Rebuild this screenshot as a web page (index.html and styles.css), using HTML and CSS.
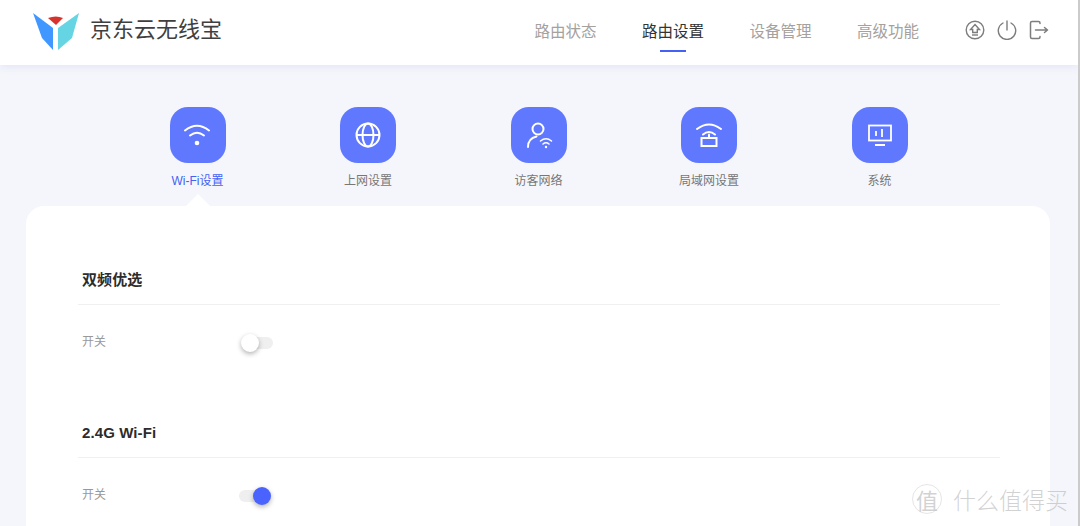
FILE: index.html
```html
<!DOCTYPE html>
<html lang="zh-CN">
<head>
  <meta charset="UTF-8" />
  <meta name="viewport" content="width=device-width, initial-scale=1.0" />
  <title>京东云无线宝</title>
  <link rel="stylesheet" href="styles.css">
</head>
<body>
  <header class="topbar">
    <div class="brand">
      <svg class="logo" width="48" height="38" viewBox="0 0 48 38">
        <path d="M1 1 L21 16 L21 38 L10 26 Z" fill="#3f97ff"/>
        <path d="M47 1 L26 16 L26 38 L40 26 Z" fill="#66d5e3"/>
        <path d="M16 6 Q24 3 31 6 L24 13 Z" fill="#d7322c"/>
      </svg>
      <span class="brand-name">京东云无线宝</span>
    </div>
    <nav class="main-nav">
      <a class="nav-item">路由状态</a>
      <a class="nav-item active">路由设置</a>
      <a class="nav-item">设备管理</a>
      <a class="nav-item">高级功能</a>
    </nav>
    <div class="tools">
      <svg width="20" height="20" viewBox="0 0 20 20" fill="none" stroke="#7d7d7d" stroke-width="1.400">
        <circle cx="10" cy="10" r="8.800"/>
        <path d="M10 4.500 L14.500 9.500 H12.300 V12.500 H7.700 V9.500 H5.500 Z"/>
        <path d="M7 15 H13"/>
      </svg>
      <svg width="20" height="20" viewBox="0 0 20 20" fill="none" stroke="#7d7d7d" stroke-width="1.400" stroke-linecap="round">
        <path d="M6 3 A8.700 8.700 0 1 0 14 3"/>
        <path d="M10 1 V10"/>
      </svg>
      <svg width="20" height="20" viewBox="0 0 20 20" fill="none" stroke="#7d7d7d" stroke-width="1.500" stroke-linecap="round" stroke-linejoin="round">
        <path d="M11 3.500 V3 Q11 1.500 9.500 1.500 H3 Q1.500 1.500 1.500 3 V17 Q1.500 18.500 3 18.500 H9.500 Q11 18.500 11 17 V16.500"/>
        <path d="M6.500 10 H18.500 M15.500 7.500 L18.500 10 L15.500 12.500"/>
      </svg>
    </div>
  </header>

  <main class="content">
    <div class="categories">
      <div class="category selected">
        <div class="cat-icon">
          <svg width="30" height="30" viewBox="0 0 30 30" fill="none" stroke="#fff" stroke-width="2" stroke-linecap="round">
            <path d="M2 10.500 Q14 1 26 10.500"/>
            <path d="M7 15.500 Q14 10 21 15.500"/>
            <circle cx="14" cy="23" r="2.300" fill="#fff" stroke="none"/>
          </svg>
        </div>
        <span class="cat-label">Wi-Fi设置</span>
      </div>
      <div class="category">
        <div class="cat-icon">
          <svg width="30" height="30" viewBox="0 0 30 30" fill="none" stroke="#fff" stroke-width="2">
            <circle cx="15" cy="15" r="11.500"/>
            <ellipse cx="15" cy="15" rx="5.500" ry="11.500"/>
            <path d="M3.500 15 H26.500"/>
          </svg>
        </div>
        <span class="cat-label">上网设置</span>
      </div>
      <div class="category">
        <div class="cat-icon">
          <svg width="30" height="30" viewBox="0 0 30 30" fill="none" stroke="#fff" stroke-width="2" stroke-linecap="round">
            <circle cx="14" cy="9" r="5.500"/>
            <path d="M4 27 Q4 18.500 12.500 16.500"/>
            <path d="M16.500 21 Q22 16.500 27.500 21" stroke-width="1.600"/>
            <path d="M19 24 Q22 21.500 25 24" stroke-width="1.600"/>
            <circle cx="22" cy="27" r="1.200" fill="#fff" stroke="none"/>
          </svg>
        </div>
        <span class="cat-label">访客网络</span>
      </div>
      <div class="category">
        <div class="cat-icon">
          <svg width="30" height="30" viewBox="0 0 30 30" fill="none" stroke="#fff" stroke-width="2" stroke-linecap="round">
            <path d="M3 9 Q15 0 27 9"/>
            <path d="M9 14.500 Q15 9.500 21 14.500"/>
            <path d="M15 14.500 V18"/>
            <rect x="7.500" y="18" width="15" height="8"/>
          </svg>
        </div>
        <span class="cat-label">局域网设置</span>
      </div>
      <div class="category">
        <div class="cat-icon">
          <svg width="30" height="30" viewBox="0 0 30 30" fill="none" stroke="#fff" stroke-width="1.800">
            <rect x="4" y="5.500" width="22" height="15"/>
            <path d="M11 11 V16 M17 9 V17 M10 25 H20"/>
          </svg>
        </div>
        <span class="cat-label">系统</span>
      </div>
    </div>

    <section class="panel">
      <div class="group">
        <h2 class="group-title">双频优选</h2>
        <div class="setting-row">
          <span class="setting-label">开关</span>
          <span class="switch"><span class="knob"></span></span>
        </div>
      </div>
      <div class="group">
        <h2 class="group-title">2.4G Wi-Fi</h2>
        <div class="setting-row">
          <span class="setting-label">开关</span>
          <span class="switch on"><span class="knob"></span></span>
        </div>
      </div>
    </section>
  </main>

  <div class="watermark">
    <span class="wm-badge">值</span>
    <span class="wm-text">什么值得买</span>
  </div>
</body>
</html>
```

FILE: styles.css
```css
html, body {
  height: 100%;
}

body {
  font-family: "Liberation Sans", "Noto Sans CJK SC", sans-serif;
  background-color: #f5f6fb;
  margin: 0;
  overflow: hidden;
  border-right: 2px solid #cbcbcb;
  box-sizing: border-box;
}

.topbar {
  display: flex;
  align-items: center;
  height: 65px;
  padding: 0 29px 6px 32px;
  background: #fff;
  box-shadow: 0 2px 8px rgba(90, 110, 220, 0.12);
  box-sizing: border-box;
}

.brand {
  display: flex;
  align-items: center;
  gap: 10px;
}

.logo {
  margin-top: 3px;
}

.brand-name {
  font-size: 22px;
  color: #3f3f3f;
  margin-top: -6px;
}

.main-nav {
  display: flex;
  gap: 45.500px;
  margin-left: auto;
  margin-right: 46px;
  margin-top: 4px;
}

.nav-item {
  position: relative;
  font-size: 15.500px;
  color: #a5a19d;
  line-height: 24px;
}

.nav-item.active {
  color: #333;
}

.nav-item.active::after {
  content: "";
  position: absolute;
  left: 18px;
  bottom: -8px;
  width: 26px;
  height: 2px;
  background: #4561f5;
}

.tools {
  display: flex;
  gap: 12px;
}

.content {
  padding: 0 28px 0 26px;
}

.categories {
  display: flex;
  justify-content: center;
  padding: 42px 0 0 1px;
  height: 99px;
}

.category {
  display: flex;
  flex-direction: column;
  align-items: center;
  width: 170.500px;
  position: relative;
}

.cat-icon {
  display: flex;
  align-items: center;
  justify-content: center;
  width: 56px;
  height: 56px;
  border-radius: 18px;
  background: #5f78fe;
}

.cat-label {
  margin-top: 8px;
  font-size: 12px;
  line-height: 20px;
  color: #777;
}

.selected .cat-label {
  color: #4561f5;
}

.selected::after {
  content: "";
  position: absolute;
  top: 87px;
  left: 50%;
  margin-left: -13px;
  border-left: 13px solid transparent;
  border-right: 13px solid transparent;
  border-bottom: 13px solid #fff;
}

.panel {
  background: #fff;
  border-radius: 18px 18px 0 0;
  padding: 62px 50px 0 52px;
  height: 320px;
  box-sizing: border-box;
}

.group {
  margin-bottom: 68px;
}

.group-title {
  margin: 0;
  padding: 0 0 12px 4px;
  font-size: 15px;
  line-height: 24px;
  letter-spacing: 0.100px;
  font-weight: 700;
  color: #2c2c2c;
  border-bottom: 1px solid #f0f0f0;
}

.setting-row {
  display: flex;
  align-items: center;
  padding: 26px 0 0 4px;
}

.setting-label {
  width: 157px;
  font-size: 12px;
  line-height: 22px;
  color: #999;
}

.switch {
  position: relative;
  display: block;
  width: 30px;
  height: 12px;
  margin: 2px 0 0 4px;
  border-radius: 6px;
  background: #efefef;
}

.switch.on {
  margin-left: 0;
}

.knob {
  position: absolute;
  top: -3px;
  left: -2px;
  width: 18px;
  height: 18px;
  border-radius: 50%;
  background: #fff;
  box-shadow: 0 2px 5px rgba(0, 0, 0, 0.3);
}

.switch.on .knob {
  left: 14px;
  background: #4a63ff;
}

.watermark {
  position: absolute;
  right: 12px;
  bottom: 10px;
  display: flex;
  align-items: center;
  gap: 11px;
  color: rgba(180, 180, 180, 0.6);
}

.wm-badge {
  display: flex;
  align-items: center;
  justify-content: center;
  width: 28px;
  height: 28px;
  border: 1px solid rgba(190, 190, 190, 0.4);
  border-radius: 50%;
  font-size: 22px;
}

.wm-text {
  font-size: 23px;
  font-weight: 300;
}
```
